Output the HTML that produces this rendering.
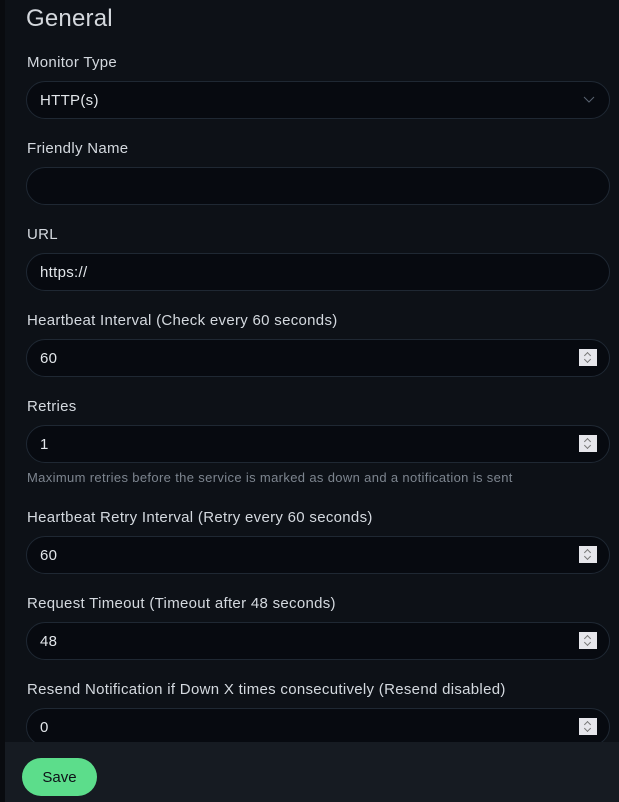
<!DOCTYPE html>
<html><head><style>
body{margin:0;width:619px;height:802px;background:#0d1117;font-family:"Liberation Sans",sans-serif;overflow:hidden;position:relative;color:#dde2e8}
.strip{position:absolute;left:0;top:0;width:5px;height:802px;background:#090b0f}
.a{position:absolute}
h1{position:absolute;left:26px;top:5px;margin:0;font-size:24px;font-weight:normal;color:#d4d8dd;letter-spacing:0.2px}
.l{position:absolute;left:27px;font-size:15px;color:#d4d9df;letter-spacing:0.3px;margin-top:1px}
.i{position:absolute;left:26px;width:582px;height:36px;border:1px solid #1f2833;border-radius:19px;background:#070a10;font-size:15px;line-height:38px;color:#e2e6ea;box-sizing:content-box;letter-spacing:0.3px}
.i span{margin-left:13px}
.sp{position:absolute;right:12px;top:9px;width:18px;height:17px;background:#e6e6eb}
.sp:before,.sp:after{content:"";position:absolute;left:6px;width:4px;height:4px;border-left:1px solid #777;border-top:1px solid #777;transform:rotate(45deg)}
.sp:before{top:4px}.sp:after{top:8px;transform:rotate(225deg)}
.h{position:absolute;left:27px;top:470px;font-size:13px;color:#7d858f;letter-spacing:0.35px}
.bar{position:absolute;left:5px;top:742px;width:614px;height:60px;background:#161b22}
.btn{position:absolute;left:22px;top:758px;width:75px;height:38px;border-radius:19px;background:#5cdd8b;color:#0d1117;font-size:15px;text-align:center;line-height:40px}
</style></head><body>
<div class="strip"></div>
<h1>General</h1>
<div class="l" style="top:53px">Monitor Type</div>
<div class="i" style="top:81px"><span>HTTP(s)</span><svg class="a" style="right:14px;top:14px" width="12" height="8"><path d="M1 1l5 5 5-5" stroke="#596270" fill="none"/></svg></div>
<div class="l" style="top:139px">Friendly Name</div>
<div class="i" style="top:167px"></div>
<div class="l" style="top:225px">URL</div>
<div class="i" style="top:253px"><span>https://</span></div>
<div class="l" style="top:311px">Heartbeat Interval (Check every 60 seconds)</div>
<div class="i" style="top:339px"><span>60</span><div class="sp"></div></div>
<div class="l" style="top:397px">Retries</div>
<div class="i" style="top:425px"><span>1</span><div class="sp"></div></div>
<div class="h">Maximum retries before the service is marked as down and a notification is sent</div>
<div class="l" style="top:508px">Heartbeat Retry Interval (Retry every 60 seconds)</div>
<div class="i" style="top:536px"><span>60</span><div class="sp"></div></div>
<div class="l" style="top:594px">Request Timeout (Timeout after 48 seconds)</div>
<div class="i" style="top:622px"><span>48</span><div class="sp"></div></div>
<div class="l" style="top:680px">Resend Notification if Down X times consecutively (Resend disabled)</div>
<div class="i" style="top:708px"><span>0</span><div class="sp"></div></div>
<div class="bar"></div>
<div class="btn">Save</div>
</body></html>
